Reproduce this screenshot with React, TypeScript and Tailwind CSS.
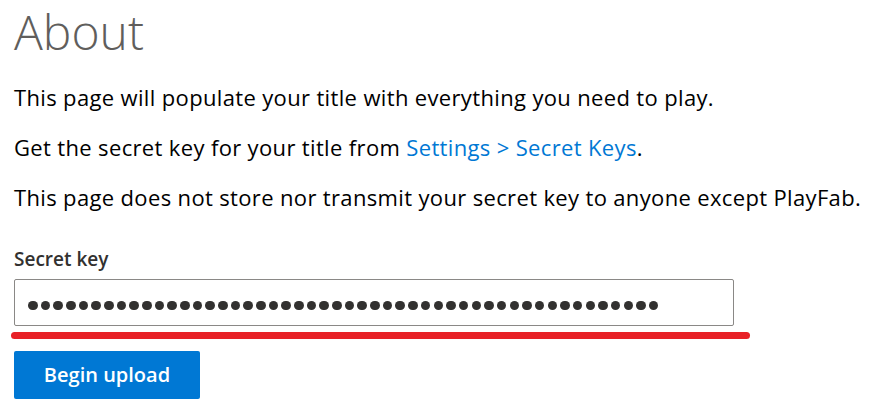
export default function App() {
  const dots = Array.from({ length: 50 });
  return (
    <div
      className="bg-white min-h-screen pl-[14px] text-black"
      style={{ fontFamily: "'Open Sans', 'Noto Sans', sans-serif" }}
    >
      <h1 className="text-[48px] font-light leading-[68px] text-[#605e5c] -mt-[2px] mb-[16px]">About</h1>

      <div className="flex flex-col gap-[20px] text-[22px] leading-[30px] tracking-[0.35px]">
        <p>This page will populate your title with everything you need to play.</p>
        <p>
          Get the secret key for your title from{' '}
          <a href="#" className="text-[#0078d4]">Settings &gt; Secret Keys</a>.
        </p>
        <p>This page does not store nor transmit your secret key to anyone except PlayFab.</p>
      </div>

      {/* Secret key field */}
      <label className="block mt-[34px] mb-[7px] text-[19px] font-semibold leading-[26px] text-[#323130]">
        Secret key
      </label>
      <div className="flex items-center w-[720px] h-[47px] border border-[#8a8886] rounded-[2px] pl-[13px] pt-[6px]">
        <div className="flex gap-[3.18px]">
          {dots.map((_, i) => (
            <span key={i} className="block w-[9.5px] h-[9.5px] rounded-full bg-[#323130]" />
          ))}
        </div>
      </div>
      {/* Red underline mark */}
      <div className="w-[739px] h-[7px] rounded-full bg-[#e82127] -ml-[3px] mt-[6px]" />

      <button className="mt-[12px] w-[186px] h-[48px] rounded-[2px] bg-[#0078d4] text-white text-[20px] font-semibold">
        Begin upload
      </button>
    </div>
  );
}
